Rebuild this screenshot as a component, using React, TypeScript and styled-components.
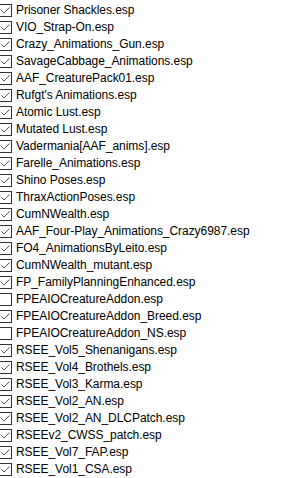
import React from "react";
import styled, { createGlobalStyle } from "styled-components";

const Global = createGlobalStyle`
  html, body { margin: 0; padding: 0; background: #fff; }
  body { font-family: "Liberation Sans", Arial, sans-serif; }
`;

const List = styled.ul`
  list-style: none;
  margin: 0;
  padding: 2px 0 0;
  display: flex;
  flex-direction: column;
`;

const Row = styled.li`
  height: 17px;
  display: flex;
  align-items: center;
  gap: 4px;
  margin-left: -1px;
`;

const Box = styled.span`
  box-sizing: border-box;
  width: 13px;
  height: 13px;
  border: 1px solid #333;
  background: #fff;
  display: flex;
  align-items: center;
  justify-content: center;
  flex-shrink: 0;
`;

const Label = styled.span`
  font-size: 12px;
  color: #000;
  white-space: nowrap;
  line-height: 17px;
  letter-spacing: -0.05px;
`;

const items: [string, boolean][] = [
  ["Prisoner Shackles.esp", true],
  ["VIO_Strap-On.esp", true],
  ["Crazy_Animations_Gun.esp", true],
  ["SavageCabbage_Animations.esp", true],
  ["AAF_CreaturePack01.esp", true],
  ["Rufgt's Animations.esp", true],
  ["Atomic Lust.esp", true],
  ["Mutated Lust.esp", true],
  ["Vadermania[AAF_anims].esp", true],
  ["Farelle_Animations.esp", true],
  ["Shino Poses.esp", true],
  ["ThraxActionPoses.esp", true],
  ["CumNWealth.esp", true],
  ["AAF_Four-Play_Animations_Crazy6987.esp", true],
  ["FO4_AnimationsByLeito.esp", true],
  ["CumNWealth_mutant.esp", true],
  ["FP_FamilyPlanningEnhanced.esp", true],
  ["FPEAIOCreatureAddon.esp", false],
  ["FPEAIOCreatureAddon_Breed.esp", true],
  ["FPEAIOCreatureAddon_NS.esp", false],
  ["RSEE_Vol5_Shenanigans.esp", true],
  ["RSEE_Vol4_Brothels.esp", true],
  ["RSEE_Vol3_Karma.esp", true],
  ["RSEE_Vol2_AN.esp", true],
  ["RSEE_Vol2_AN_DLCPatch.esp", true],
  ["RSEEv2_CWSS_patch.esp", true],
  ["RSEE_Vol7_FAP.esp", true],
  ["RSEE_Vol1_CSA.esp", true],
];

const Check = () => (
  <svg width="11" height="11" viewBox="0 0 11 11">
    <polyline points="1.5,5.5 4,8 9.5,2.5" fill="none" stroke="#555" strokeWidth="1" />
  </svg>
);

export default function App() {
  return (
    <>
      <Global />
      <List>
        {items.map(([name, on]) => (
          <Row key={name}>
            <Box>{on && <Check />}</Box>
            <Label>{name}</Label>
          </Row>
        ))}
      </List>
    </>
  );
}
